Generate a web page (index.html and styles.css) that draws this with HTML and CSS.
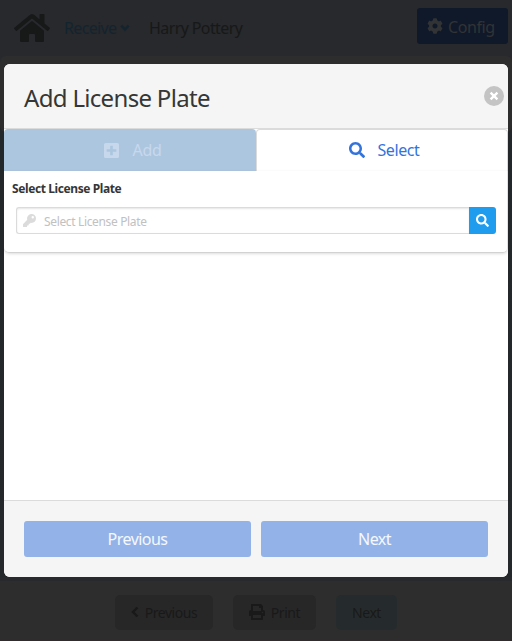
FILE: index.html
```html
<!DOCTYPE html>
<html lang="en">
<head>
<meta charset="utf-8">
<title>Add License Plate</title>
<link rel="stylesheet" href="styles.css">
</head>
<body>
<svg class="sprite" aria-hidden="true">
  <symbol id="search" viewBox="0 0 512 512"><path d="M505 442.700L405.300 343c-4.500-4.500-10.600-7-17-7H372c27.600-35.300 44-79.700 44-128C416 93.100 322.900 0 208 0S0 93.100 0 208s93.100 208 208 208c48.300 0 92.700-16.400 128-44v16.300c0 6.400 2.500 12.500 7 17l99.700 99.700c9.400 9.400 24.600 9.400 33.900 0l28.300-28.300c9.400-9.400 9.400-24.600.1-34zM208 336c-70.700 0-128-57.200-128-128 0-70.700 57.200-128 128-128 70.700 0 128 57.200 128 128 0 70.700-57.200 128-128 128z"/></symbol>
</svg>
<header class="topbar">
  <svg class="home" viewBox="0 0 576 512"><path d="M280 149L96 300v165q0 15 16 15h112q16 0 16-16v-96q0-16 16-16h64q16 0 16 16v96q0 16 16 16h112q16 0 16-16V300L296 149q-8-6-16 0zM571 251l-83-69V44q0-12-12-12h-56q-12 0-12 12v72l-89-73q-31-25-62 0L5 251q-9 8-2 17l26 31q8 9 17 2l235-194q7-5 14 0l235 194q9 7 17-2l25-31q8-9-1-17z"/></svg>
  <span class="receive">Receive</span>
  <svg class="chevron" viewBox="0 0 10 8"><path d="M1.300 1.700L5 5.500l3.700-3.800"/></svg>
  <span class="user">Harry Pottery</span>
  <button class="config"><svg viewBox="0 0 512 512"><path fill-rule="evenodd" d="M487.400 315.700l-42.600-24.600c4.300-23.200 4.300-47 0-70.200l42.600-24.600c4.900-2.800 7.100-8.600 5.500-14-11.100-35.600-30-67.800-54.700-94.600-3.800-4.100-10-5.100-14.800-2.300L380.800 110c-17.900-15.400-38.500-27.300-60.800-35.100V25.800c0-5.600-3.900-10.500-9.400-11.700-36.700-8.200-74.300-7.800-109.200 0-5.500 1.200-9.400 6.100-9.400 11.700V75c-22.200 7.900-42.800 19.800-60.800 35.100L88.700 85.500c-4.900-2.800-11-1.900-14.800 2.300-24.700 26.700-43.600 58.900-54.700 94.600-1.700 5.400.6 11.200 5.500 14L67.300 221c-4.300 23.200-4.300 47 0 70.200l-42.600 24.600c-4.900 2.800-7.100 8.600-5.500 14 11.100 35.600 30 67.800 54.700 94.600 3.800 4.100 10 5.100 14.800 2.300l42.600-24.600c17.900 15.400 38.500 27.300 60.800 35.100v49.200c0 5.600 3.900 10.500 9.400 11.700 36.700 8.200 74.300 7.800 109.200 0 5.500-1.200 9.400-6.100 9.400-11.700v-49.200c22.200-7.900 42.800-19.800 60.800-35.100l42.600 24.600c4.900 2.800 11 1.900 14.800-2.300 24.700-26.700 43.600-58.900 54.700-94.600 1.500-5.500-.7-11.300-5.600-14.100zM256 336c-44.100 0-80-35.900-80-80s35.900-80 80-80 80 35.900 80 80-35.900 80-80 80z"/></svg><span>Config</span></button>
</header>
<div class="stage">
<main class="modal">
  <div class="modal-head">
    <h1>Add License Plate</h1>
    <svg class="close" viewBox="0 0 20 20"><circle cx="10" cy="10" r="10"/><path d="M6.600 6.600l6.800 6.800M13.400 6.600l-6.800 6.800"/></svg>
  </div>
  <div class="tabs">
    <div class="tab tab-add"><svg viewBox="0 0 448 448"><path fill-rule="evenodd" d="M48 0h352a48 48 0 0 1 48 48v352a48 48 0 0 1-48 48H48a48 48 0 0 1-48-48V48A48 48 0 0 1 48 0zM184 80v104H80v80h104v104h80V264h104v-80H264V80z"/></svg><span>Add</span></div>
    <div class="tab tab-select"><svg><use href="#search"/></svg><span>Select</span></div>
  </div>
  <section class="panel">
    <label for="plate">Select License Plate</label>
    <div class="field">
      <div class="input"><svg viewBox="0 0 512 512"><path d="M512 176c0 97.200-78.800 176-176 176-11.200 0-22.200-1.100-32.800-3.100l-24 27a24 24 0 0 1-18 8.100H224v40a24 24 0 0 1-24 24h-40v40a24 24 0 0 1-24 24H24a24 24 0 0 1-24-24v-78.100c0-6.400 2.500-12.500 7-17l161.800-161.800A176 176 0 1 1 512 176zm-176-48a48 48 0 1 0 96 0 48 48 0 1 0-96 0z"/></svg><input id="plate" placeholder="Select License Plate"></div>
      <button class="find" aria-label="Search"><svg><use href="#search"/></svg></button>
    </div>
  </section>
  <div class="body"></div>
  <div class="modal-foot">
    <button class="prev"><span>Previous</span></button>
    <button class="next"><span>Next</span></button>
  </div>
</main>
</div>
<footer class="page-foot">
  <button class="p-prev"><svg viewBox="0 0 8 12"><path d="M6.500 1.500L2 6l4.500 4.500" fill="none" stroke="currentColor" stroke-width="2.400"/></svg><span>Previous</span></button>
  <button class="p-print"><svg viewBox="0 0 512 512"><path fill-rule="evenodd" d="M448 192V77.300c0-8.500-3.400-16.600-9.400-22.600L393.400 9.400c-6-6-14.100-9.400-22.600-9.400H96C78.300 0 64 14.300 64 32v160c-35.300 0-64 28.700-64 64v112c0 8.800 7.200 16 16 16h48v96c0 17.700 14.300 32 32 32h320c17.700 0 32-14.300 32-32v-96h48c8.800 0 16-7.200 16-16V256c0-35.300-28.700-64-64-64zm-64 256H128v-96h256v96zm0-224H128V64h192v48c0 8.800 7.200 16 16 16h48v96zm48 72a24 24 0 1 1 0-48 24 24 0 0 1 0 48z"/></svg><span>Print</span></button>
  <button class="p-next"><span>Next</span></button>
</footer>
</body>
</html>
```
FILE: styles.css
```css
* { box-sizing: border-box; }
body {
  margin: 0;
  height: 641px;
  overflow: hidden;
  display: flex;
  flex-direction: column;
  background: #27292c;
  color: #363636;
  font: 16px/24px "Noto Sans", "Open Sans", sans-serif;
}
svg { display: block; fill: currentColor; flex: none; }
button { border: 0; padding: 0; font: inherit; display: flex; align-items: center; }
span, h1, label { white-space: nowrap; }
.sprite { position: absolute; width: 0; height: 0; }

.topbar { height: 56px; flex: none; display: flex; align-items: center; padding: 0 4px 0 14px; color: #171818; }
.home { width: 36px; height: 32px; }
.receive { margin-left: 14px; width: 53px; color: #13242f; letter-spacing: -0.65px; }
.chevron { width: 10px; height: 8px; margin-left: 3px; fill: none; stroke: #13242f; stroke-width: 2.400; }
.user { margin-left: 19px; letter-spacing: -0.6px; }
.config { margin: -4px 0 0 auto; width: 91px; height: 36px; padding-left: 10px; border-radius: 3px; background: #101929; color: #313335; }
.config svg { width: 16px; height: 16px; }
.config span { margin: 1px 0 0 5px; letter-spacing: -0.4px; }

/* Dimmed card that shows round the top of the dialog */
.stage { position: relative; flex: none; padding: 8px 4px 0; background: linear-gradient(#27292c 66px, #23272a 76px, #25282a); }
.stage::before { content: ""; position: absolute; inset: 0 0 auto; height: 76px; border-radius: 6px; background: #2d2d2d; }
.modal {
  position: relative;
  height: 513px;
  display: flex;
  flex-direction: column;
  background: #fff;
  border-radius: 6px;
  overflow: hidden;
}
.modal-head { height: 65px; flex: none; display: flex; align-items: center; justify-content: space-between; padding: 0 4px 0 20px; background: #f5f5f5; border-bottom: 1px solid #dbdbdb; }
h1 { margin: 3px 0 0; font-size: 24px; line-height: 24px; font-weight: 400; letter-spacing: -0.68px; }
.close { width: 20px; height: 20px; fill: #c4c4c4; }
.close path { fill: none; stroke: #fff; stroke-width: 2.400; }

.tabs { display: flex; height: 42px; flex: none; }
.tab { flex: 1; display: flex; align-items: center; justify-content: center; border-radius: 4px 4px 0 0; }
.tab-add { flex: 0 0 252px; background: #adc6e0; color: #c7d8ed; }
.tab-add svg { width: 15px; height: 15px; margin-left: 6px; }
.tab-add span { margin-left: 13px; letter-spacing: -0.3px; }
.tab-select { color: #3273dc; border: 1px solid #dbdbdb; border-bottom: 0; }
.tab-select svg { width: 16px; height: 16px; margin: -2px 0 0 5px; }
.tab-select span { margin: -2px 0 0 12px; letter-spacing: -0.4px; }

.panel { height: 82px; flex: none; padding: 8px 12px 0 8px; border-bottom: 1px solid #d2d2d2; border-right: 1px solid #e2e2e2; border-radius: 0 0 5px 5px; box-shadow: 0 1px 3px #0002; }
label { display: block; font-size: 12px; line-height: 20px; font-weight: 700; letter-spacing: -0.4px; }
.field { display: flex; margin: 8px -1px 0 4px; height: 27px; }
.input { flex: 1; display: flex; align-items: center; border: 1px solid #dbdbdb; border-right: 0; border-radius: 3px 0 0 3px; box-shadow: inset 0 1px 2px #0a0a0a1a; padding-left: 6px; color: #dbdbdb; }
.input svg { width: 13px; height: 13px; }
input { flex: 1; min-width: 0; margin-left: 8px; padding: 2px 0 0; border: 0; outline: 0; background: none; font: 12px/20px "Noto Sans", sans-serif; letter-spacing: -0.35px; }
input::placeholder { color: #c1c1c1; opacity: 1; }
.find { width: 27px; justify-content: center; background: #209cee; color: #fff; border-radius: 0 3px 3px 0; }
.find svg { width: 13px; height: 13px; }

.body { flex: 1; }
.modal-foot { height: 77px; flex: none; display: flex; gap: 10px; padding: 20px; background: #f5f5f5; border-top: 1px solid #dbdbdb; }
.modal-foot button { flex: 1; height: 36px; justify-content: center; border-radius: 3px; background: #93b3e8; color: #f5f8fd; letter-spacing: -0.55px; }

.page-foot { margin-top: 4px; height: 60px; flex: none; display: flex; align-items: flex-start; padding: 14px 0 0 115px; gap: 20px; background: #2d2d2d; border-bottom: 2px solid #302b2d; color: #191919; font-size: 14px; }
.page-foot button { height: 35px; justify-content: center; border-radius: 5px; background: #272727; color: #191919; letter-spacing: -0.45px; }
.page-foot span { margin-top: 1px; }
.page-foot svg + span { margin-left: 6px; }
.p-prev { width: 98px; }
.p-prev svg { width: 8px; height: 12px; margin-top: -2px; }
.p-print { width: 83px; }
.p-print svg { width: 16px; height: 16px; margin-top: -2px; }
.page-foot .p-next { width: 61px; background: #252b2c; }
```
